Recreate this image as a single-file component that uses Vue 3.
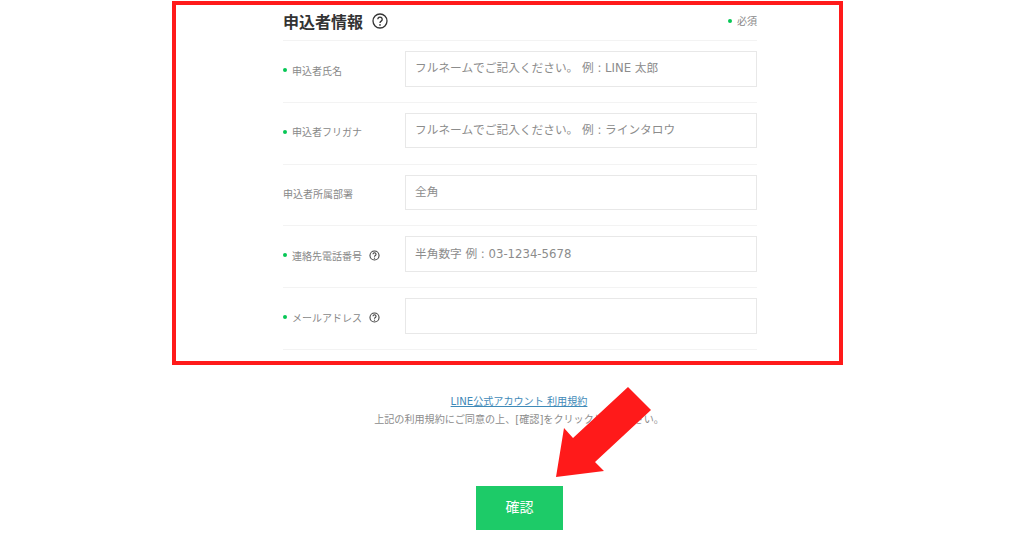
<script setup>
const rows = [
  { label: '申込者氏名', required: true, placeholder: 'フルネームでご記入ください。 例 : LINE 太郎' },
  { label: '申込者フリガナ', required: true, placeholder: 'フルネームでご記入ください。 例 : ラインタロウ' },
  { label: '申込者所属部署', required: false, placeholder: '全角' },
  { label: '連絡先電話番号', required: true, help: true, placeholder: '半角数字 例 : 03-1234-5678' },
  { label: 'メールアドレス', required: true, help: true, placeholder: '' },
];
</script>

<template>
  <div class="page">
    <section class="frame">
      <div class="form">
        <div class="form_head">
          <h2 class="title">
            申込者情報
            <svg class="help help_big" viewBox="0 0 16 16">
              <circle cx="8" cy="8" r="7" />
              <path d="M5.8 6.2a2.2 2.2 0 1 1 3.4 1.9c-.8.5-1.2.9-1.2 1.8" />
              <circle class="help_dot" cx="8" cy="11.9" r=".9" />
            </svg>
          </h2>
          <span class="required_note"><i class="dot"></i>必須</span>
        </div>
        <div class="row" v-for="row in rows" :key="row.label">
          <div class="label">
            <i v-if="row.required" class="dot"></i>
            <span>{{ row.label }}</span>
            <svg v-if="row.help" class="help" viewBox="0 0 16 16">
              <circle cx="8" cy="8" r="6.6" />
              <path d="M5.8 6.2a2.2 2.2 0 1 1 3.4 1.9c-.8.5-1.2.9-1.2 1.8" />
              <circle class="help_dot" cx="8" cy="11.9" r=".9" />
            </svg>
          </div>
          <input class="field" type="text" :placeholder="row.placeholder" />
        </div>
      </div>
    </section>

    <div class="terms">
      <a class="terms_link" href="#">LINE公式アカウント 利用規約</a>
      <p class="terms_text">上記の利用規約にご同意の上、[確認]をクリックしてください。</p>
    </div>

    <button class="confirm" type="button">確認</button>

    <svg class="arrow" viewBox="0 0 1024 538">
      <polygon points="556,477 564,428 573,438 628,387 651,410 595,462 604,471" />
    </svg>
  </div>
</template>

<style>
html, body { margin: 0; background: #fff; }
</style>

<style scoped>
.page {
  position: relative;
  width: 1024px;
  height: 538px;
  overflow: hidden;
  background: #fff;
  font-family: "DejaVu Sans", "Noto Sans CJK JP", sans-serif;
}

.frame {
  box-sizing: border-box;
  width: 671px;
  height: 364px;
  margin: 1px 0 0 172px;
  border: 4px solid #ff1a1a;
  padding-left: 107px;
}

.form { width: 474px; }

.form_head {
  display: flex;
  justify-content: space-between;
  align-items: flex-start;
  height: 35px;
  border-bottom: 1px solid #f3f3f3;
}

.title {
  display: flex;
  align-items: center;
  gap: 9px;
  height: 31px;
  margin: 0;
  font-size: 16px;
  font-weight: 700;
  color: #333;
}

.required_note {
  display: flex;
  align-items: center;
  height: 31px;
  font-size: 10px;
  color: #888;
}

.dot {
  width: 4px;
  height: 4px;
  margin-right: 5px;
  border-radius: 50%;
  background: #06c755;
  flex: none;
}

.row {
  display: flex;
  justify-content: space-between;
  align-items: flex-start;
  box-sizing: border-box;
  height: 61.8px;
  padding-top: 10px;
  border-bottom: 1px solid #f3f3f3;
}

.label {
  display: flex;
  align-items: center;
  height: 38px;
  font-size: 10px;
  color: #888;
}

.help {
  width: 11px;
  height: 11px;
  margin-left: 7px;
  fill: none;
  stroke: #444;
  stroke-width: 1.6;
}

.help_big {
  width: 16px;
  height: 16px;
  margin-left: 0;
  stroke: #333;
  stroke-width: 1.3;
}

.help_dot { fill: #444; stroke: none; }

.field {
  box-sizing: border-box;
  width: 352px;
  height: 35.5px;
  padding: 0 9px 1px;
  border: 1px solid #e8e8e8;
  border-radius: 0;
  outline: none;
  font: 11.7px "DejaVu Sans", "Noto Sans CJK JP", sans-serif;
  color: #333;
}

.field::placeholder { color: #8c8c8c; opacity: 1; }

.terms {
  width: 1038px;
  margin-top: 29px;
  text-align: center;
}

.terms_link {
  display: block;
  font-size: 10.1px;
  line-height: 16px;
  color: #3f8ab8;
}

.terms_text {
  margin: 2px 0 0;
  font-size: 10.1px;
  line-height: 16px;
  color: #8c8c8c;
}

.confirm {
  display: block;
  width: 87px;
  height: 44px;
  margin: 58px 0 0 476px;
  padding: 0 0 4px;
  border: none;
  background: #1dcb68;
  color: #fff;
  font: 14px "Noto Sans CJK JP", serif;
}

.arrow {
  position: absolute;
  inset: 0;
  width: 1024px;
  height: 538px;
  fill: #ff1a1a;
  pointer-events: none;
}
</style>
